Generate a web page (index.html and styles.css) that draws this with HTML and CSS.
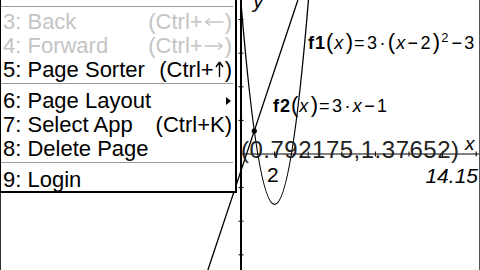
FILE: index.html
```html
<!DOCTYPE html>
<html>
<head>
<meta charset="utf-8">
<link rel="stylesheet" href="styles.css">
</head>
<body>
<div class="screen">
  <svg class="graph" width="480" height="270" viewBox="0 0 480 270">
    <line class="frame" x1="0.5" y1="0" x2="0.5" y2="270"/>
    <line class="frame right" x1="479.5" y1="0" x2="479.5" y2="270"/>
    <line class="axis" x1="241" y1="0" x2="241" y2="270" stroke-width="2"/>
    <path class="axis" stroke-width="1" d="M238.5 19.6h5M238.5 53.2h5M238.5 86.8h5M238.5 120.4h5M238.5 187.6h5M238.5 221.2h5M238.5 254.8h5"/>
    <line class="axis" x1="241" y1="154" x2="479" y2="154" stroke-width="1"/>
    <path class="axis" stroke-width="1" d="M274.6 151.5v5M308.2 151.5v5M341.8 151.5v5M375.4 151.5v5M409 151.5v5M442.6 151.5v5M476.2 151.5v5"/>
    <path class="curve" d="M239.3 -17.9 Q274.6 426.7 309.9 -17.9"/>
    <line class="curve" x1="207.9" y1="270" x2="297.9" y2="0"/>
    <circle cx="254.3" cy="130.9" r="2.6" fill="#000"/>
  </svg>

  <div class="lbl ylab">y</div>
  <div class="lbl fn f1"><b>f1</b><span class="par">(</span><i>x</i><span class="par">)</span>=3·<span class="par">(</span><i>x</i>−2<span class="par">)</span><span class="sup">2</span>−3</div>
  <div class="lbl fn f2"><b>f2</b><span class="par">(</span><i>x</i><span class="par">)</span>=3·<i>x</i>−1</div>
  <div class="lbl coord">(0.792175,1.37652)</div>
  <div class="lbl xlab">x</div>
  <div class="lbl xmax">14.15</div>
  <div class="lbl two">2</div>

  <div class="menu">
    <div class="ghost"></div>
    <div class="sep first"></div>
    <div class="item off"><span>3: Back</span><span class="key">(Ctrl+<svg class="arr" width="20" height="10" viewBox="0 0 20 10"><path d="M1.5 5H19.5M1.5 5L6 1.5M1.5 5L6 8.5"/></svg>)</span></div>
    <div class="item off"><span>4: Forward</span><span class="key">(Ctrl+<svg class="arr" width="20" height="10" viewBox="0 0 20 10"><path d="M0.5 5H18.5M18.5 5L14 1.5M18.5 5L14 8.5"/></svg>)</span></div>
    <div class="item"><span>5: Page Sorter</span><span class="key">(Ctrl+<svg class="arr up" width="9" height="16" viewBox="0 0 9 16"><path d="M4.5 1V16M4.5 1L1 6M4.5 1L8 6"/></svg>)</span></div>
    <div class="sep"></div>
    <div class="item"><span>6: Page Layout</span><span class="tri"></span></div>
    <div class="item"><span>7: Select App</span><span>(Ctrl+K)</span></div>
    <div class="item"><span>8: Delete Page</span></div>
    <div class="sep"></div>
    <div class="item last"><span>9: Login</span></div>
  </div>
</div>
</body>
</html>
```

FILE: styles.css
```css
html, body {
  margin: 0;
  padding: 0;
  background: #fff;
}

.screen {
  position: relative;
  width: 480px;
  height: 270px;
  overflow: hidden;
  background: #fff;
  font-family: "Liberation Sans", Arial, sans-serif;
  color: #000;
}

.graph {
  position: absolute;
  left: 0;
  top: 0;
}

.frame {
  stroke: #333;
  stroke-width: 1;
}

.frame.right {
  stroke: #555;
}

.axis {
  stroke: #000;
  fill: none;
}

.curve {
  stroke: #000;
  stroke-width: 1.3;
  fill: none;
}

.lbl {
  position: absolute;
  white-space: nowrap;
  line-height: 1;
}

.ylab {
  left: 253px;
  top: -10px;
  font-size: 21px;
  font-style: italic;
}

.fn {
  font-size: 18px;
  letter-spacing: 2.4px;
}

.fn b {
  font-weight: bold;
  letter-spacing: 1px;
}

.fn i {
  font-style: italic;
}

.fn .par {
  font-size: 22px;
  line-height: 0;
  font-weight: normal;
  letter-spacing: 1px;
}

.fn .sup {
  font-size: 13px;
  line-height: 0;
  vertical-align: 7px;
  letter-spacing: 3px;
}

.f1 {
  left: 308px;
  top: 34px;
}

.f2 {
  left: 273px;
  top: 97px;
}

.coord {
  left: 241px;
  top: 138px;
  font-size: 24px;
  letter-spacing: 0.5px;
  color: #222;
}

.xlab {
  left: 465px;
  top: 134px;
  font-size: 19px;
  font-style: italic;
}

.xmax {
  right: 2px;
  top: 165px;
  font-size: 21px;
  font-style: italic;
}

.two {
  left: 267px;
  top: 164px;
  font-size: 21px;
}

.menu {
  position: absolute;
  left: 0;
  top: -19px;
  width: 237px;
  box-sizing: border-box;
  background: #fff;
  border-left: 1px solid #000;
  border-right: 2px solid #000;
  border-bottom: 2px solid #000;
  display: flex;
  flex-direction: column;
  font-size: 22px;
}

.ghost {
  height: 24px;
}

.item {
  display: flex;
  justify-content: space-between;
  align-items: center;
  height: 24px;
  line-height: 24px;
  padding: 0 3px 0 2px;
  white-space: nowrap;
}

.item.last {
  height: 23px;
}

.item.off {
  color: #c4c4c4;
}

.key {
  display: inline-flex;
  align-items: center;
}

.arr {
  display: block;
  margin: 0 1px;
}

.arr path {
  stroke: currentColor;
  stroke-width: 1.4;
  fill: none;
}

.arr.up {
  margin: 0 1px 2px;
}

.sep {
  height: 1px;
  background: #9a9a9a;
  margin: 1px 2px 5px 0;
}

.sep.first {
  margin-bottom: 3px;
}

.tri {
  width: 0;
  height: 0;
  border-left: 5px solid #000;
  border-top: 4px solid transparent;
  border-bottom: 4px solid transparent;
  margin-right: 1px;
}
```
